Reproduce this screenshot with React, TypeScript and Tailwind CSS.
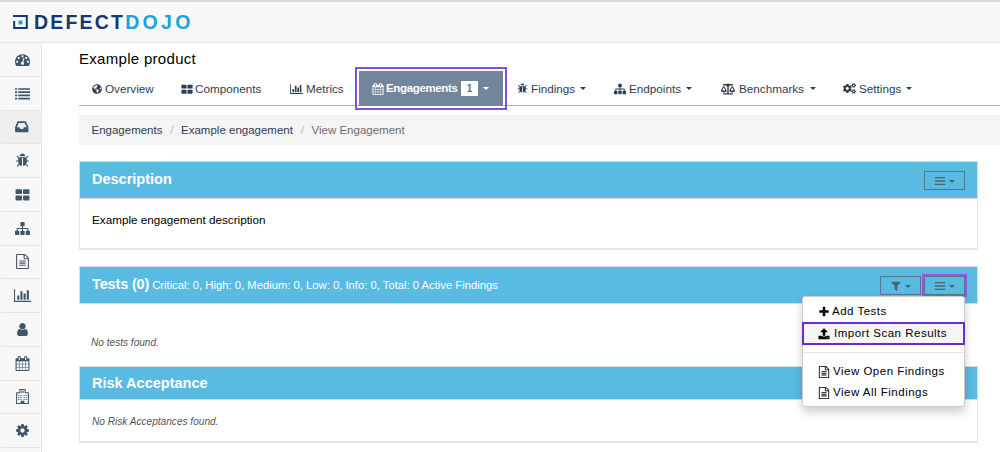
import type { ReactNode } from "react";
import { FaBalanceScale, FaCogs, FaGlobeAmericas } from "react-icons/fa";

const icons = {
  dashboard: "M384 1152q0-53-37.5-90.5t-90.5-37.5-90.5 37.5-37.5 90.5 37.5 90.5 90.5 37.5 90.5-37.5 37.5-90.5zm192-448q0-53-37.5-90.5t-90.5-37.5-90.5 37.5-37.5 90.5 37.5 90.5 90.5 37.5 90.5-37.5 37.5-90.5zm428 481l101-382q6-26-7.5-48.5t-38.5-29.5-48 6.5-30 39.5l-101 382q-60 5-107 43.5t-63 98.5q-20 77 20 146t117 89 146-20 89-117q16-60-6-117t-72-91zm660-33q0-53-37.5-90.5t-90.5-37.5-90.5 37.5-37.5 90.5 37.5 90.5 90.5 37.5 90.5-37.5 37.5-90.5zm-640-640q0-53-37.5-90.5t-90.5-37.5-90.5 37.5-37.5 90.5 37.5 90.5 90.5 37.5 90.5-37.5 37.5-90.5zm448 192q0-53-37.5-90.5t-90.5-37.5-90.5 37.5-37.5 90.5 37.5 90.5 90.5 37.5 90.5-37.5 37.5-90.5zm320 448q0 261-141 483-19 29-54 29h-1402q-35 0-54-29-141-221-141-483 0-182 71-348t191-286 286-191 348-71 348 71 286 191 191 286 71 348z",
  list: "M0 256h256v192h-256zM384 256h1408v192h-1408zM0 640h256v192h-256zM384 640h1408v192h-1408zM0 1024h256v192h-256zM384 1024h1408v192h-1408zM0 1408h256v192h-256zM384 1408h1408v192h-1408z",
  inbox: "M1151 960h316q-1-3-2.5-8.5t-2.5-7.5l-212-496h-708l-212 496q-1 3-2.5 8.5t-2.5 7.5h316l95 192h320zm513 30v482q0 26-19 45t-45 19h-1408q-26 0-45-19t-19-45v-482q0-62 25-123l238-552q10-25 36.5-42t52.5-17h832q26 0 52.5 17t36.5 42l238 552q25 61 25 123z",
  bug: "M1696 960q0 26-19 45t-45 19h-224q0 171-67 290l208 209q19 19 19 45t-19 45q-18 19-45 19t-45-19l-198-197q-5 5-15 13t-42 28.5-65 36.5-82 29-97 13v-896h-128v896q-51 0-101.5-13.5t-87-33-66-39-43.5-32.5l-15-14-183 207q-20 21-48 21-24 0-43-16-19-18-20.5-44.5t15.5-46.5l202-227q-58-114-58-274h-224q-26 0-45-19t-19-45 19-45 45-19h224v-294l-173-173q-19-19-19-45t19-45 45-19 45 19l173 173h844l173-173q19-19 45-19t45 19 19 45-19 45l-173 173v294h224q26 0 45 19t19 45zm-480-576h-640q0-133 93.5-226.5t226.5-93.5 226.5 93.5 93.5 226.5z",
  grid: "M160 256h576q96 0 96 96v384q0 96-96 96h-576q-96 0-96-96v-384q0-96 96-96zM1056 256h576q96 0 96 96v384q0 96-96 96h-576q-96 0-96-96v-384q0-96 96-96zM160 1024h576q96 0 96 96v384q0 96-96 96h-576q-96 0-96-96v-384q0-96 96-96zM1056 1024h576q96 0 96 96v384q0 96-96 96h-576q-96 0-96-96v-384q0-96 96-96z",
  sitemap: "M1792 1248v320q0 40-28 68t-68 28h-320q-40 0-68-28t-28-68v-320q0-40 28-68t68-28h96v-192h-512v192h96q40 0 68 28t28 68v320q0 40-28 68t-68 28h-320q-40 0-68-28t-28-68v-320q0-40 28-68t68-28h96v-192h-512v192h96q40 0 68 28t28 68v320q0 40-28 68t-68 28h-320q-40 0-68-28t-28-68v-320q0-40 28-68t68-28h96v-192q0-52 38-90t90-38h512v-192h-96q-40 0-68-28t-28-68v-320q0-40 28-68t68-28h320q40 0 68 28t28 68v320q0 40-28 68t-68 28h-96v192h512q52 0 90 38t38 90v192h96q40 0 68 28t28 68z",
  file: "M1596 380q28 28 48 76t20 88v1152q0 40-28 68t-68 28h-1344q-40 0-68-28t-28-68v-1600q0-40 28-68t68-28h896q40 0 88 20t76 48zm-444-244v376h376q-10-29-22-41l-313-313q-12-12-41-22zm384 1528v-1024h-416q-40 0-68-28t-28-68v-416h-768v1536h1280zm-1024-864q0-14 9-23t23-9h704q14 0 23 9t9 23v64q0 14-9 23t-23 9h-704q-14 0-23-9t-9-23v-64zm736 224q14 0 23 9t9 23v64q0 14-9 23t-23 9h-704q-14 0-23-9t-9-23v-64q0-14 9-23t23-9h704zm0 256q14 0 23 9t9 23v64q0 14-9 23t-23 9h-704q-14 0-23-9t-9-23v-64q0-14 9-23t23-9h704z",
  chart: "M640 896v512h-256v-512h256zm384-512v1024h-256v-1024h256zm1024 1152v128h-2048v-1536h128v1408h1920zm-640-896v768h-256v-768h256zm384-384v1152h-256v-1152h256z",
  user: "M1536 1399q0 109-62.5 187t-150.5 78h-854q-88 0-150.5-78t-62.5-187q0-85 8.5-160.5t31.5-152 58.5-131 94-89 134.5-34.5q131 128 313 128t313-128q76 0 134.5 34.5t94 89 58.5 131 31.5 152 8.5 160.5zm-256-887q0 159-112.5 271.5t-271.5 112.5-271.5-112.5-112.5-271.5 112.5-271.5 271.5-112.5 271.5 112.5 112.5 271.5z",
  calendar: "M192 1664h288v-288h-288v288zm352 0h320v-288h-320v288zm-352-352h288v-320h-288v320zm352 0h320v-320h-320v320zm-352-384h288v-288h-288v288zm736 736h320v-288h-320v288zm-384-736h320v-288h-320v288zm768 736h288v-288h-288v288zm-384-352h320v-320h-320v320zm-352-864v-288q0-13-9.5-22.5t-22.5-9.5h-64q-13 0-22.5 9.5t-9.5 22.5v288q0 13 9.5 22.5t22.5 9.5h64q13 0 22.5-9.5t9.5-22.5zm736 864h288v-320h-288v320zm-384-384h320v-288h-320v288zm384 0h288v-288h-288v288zm32-480v-288q0-13-9.5-22.5t-22.5-9.5h-64q-13 0-22.5 9.5t-9.5 22.5v288q0 13 9.5 22.5t22.5 9.5h64q13 0 22.5-9.5t9.5-22.5zm384-64v1280q0 52-38 90t-90 38h-1408q-52 0-90-38t-38-90v-1280q0-52 38-90t90-38h128v-96q0-66 47-113t113-47h64q66 0 113 47t47 113v96h384v-96q0-66 47-113t113-47h64q66 0 113 47t47 113v96h128q52 0 90 38t38 90z",
  hospital: "M576 0h640q64 0 64 64v320h320q64 0 64 64v1280q0 64-64 64h-1408q-64 0-64-64v-1280q0-64 64-64h320v-320q0-64 64-64zM640 128v384h-384v1152h416v-256h448v256h416v-1152h-384v-384zM768 192h96v96h64v-96h96v288h-96v-96h-64v96h-96zM384 704h128v128h-128zM640 704h128v128h-128zM1024 704h128v128h-128zM1280 704h128v128h-128zM384 944h128v128h-128zM640 944h128v128h-128zM1024 944h128v128h-128zM1280 944h128v128h-128zM384 1184h128v128h-128zM640 1184h128v128h-128zM1024 1184h128v128h-128zM1280 1184h128v128h-128z",
  cog: "M1152 896q0-106-75-181t-181-75-181 75-75 181 75 181 181 75 181-75 75-181zm512-109v222q0 12-8 23t-20 13l-185 28q-19 54-39 91 35 50 107 138 10 12 10 25t-9 23q-27 37-99 108t-94 71q-12 0-26-9l-138-108q-44 23-91 38-16 136-29 186-7 28-36 28h-222q-14 0-24.5-8.5t-11.5-21.5l-28-184q-49-16-90-37l-141 107q-10 9-25 9-14 0-25-11-126-114-165-168-7-10-7-23 0-12 8-23 15-21 51-66.5t54-70.5q-27-50-41-99l-183-27q-13-2-21-12.5t-8-23.5v-222q0-12 8-23t19-13l186-28q14-46 39-92-40-57-107-138-10-12-10-24 0-10 9-23 26-36 98.5-107.5t94.5-71.5q13 0 26 10l138 107q44-23 91-38 16-136 29-186 7-28 36-28h222q14 0 24.5 8.5t11.5 21.5l28 184q49 16 90 37l142-107q9-9 24-9 13 0 25 10 129 119 165 170 7 8 7 22 0 12-8 23-15 21-51 66.5t-54 70.5q26 50 41 98l183 28q13 2 21 12.5t8 23.5z",
  plus: "M1600 736v192q0 40-28 68t-68 28h-416v416q0 40-28 68t-68 28h-192q-40 0-68-28t-28-68v-416h-416q-40 0-68-28t-28-68v-192q0-40 28-68t68-28h416v-416q0-40 28-68t68-28h192q40 0 68 28t28 68v416h416q40 0 68 28t28 68z",
  filter: "M1595 295q17 41-14 70l-493 493v742q0 42-39 59-13 5-25 5-27 0-45-19l-256-256q-19-19-19-45v-486l-493-493q-31-29-14-70 17-39 59-39h1280q42 0 59 39z",
  upload: "M1344 1472q0-26-19-45t-45-19-45 19-19 45 19 45 45 19 45-19 19-45zm256 0q0-26-19-45t-45-19-45 19-19 45 19 45 45 19 45-19 19-45zm128-224v320q0 40-28 68t-68 28h-1472q-40 0-68-28t-28-68v-320q0-40 28-68t68-28h427q21 56 70.5 92t110.5 36h256q61 0 110.5-36t70.5-92h427q40 0 68 28t28 68zm-325-648q-17 40-59 40h-256v448q0 26-19 45t-45 19h-256q-26 0-45-19t-19-45v-448h-256q-42 0-59-40-17-39 14-69l448-448q18-19 45-19t45 19l448 448q31 30 14 69z",
  bars: "M128 290h1536v200h-1536zM128 796h1536v200h-1536zM128 1302h1536v200h-1536z",
};
type IconName = keyof typeof icons;

function Icon({ name, className = "" }: { name: IconName; className?: string }) {
  return (
    <svg viewBox={name === "chart" ? "0 0 2048 1792" : "0 0 1792 1792"} fill="currentColor" fillRule={name === "hospital" ? "evenodd" : "nonzero"} className={`shrink-0 ${className}`}>
      <path d={icons[name]} />
    </svg>
  );
}

const Caret = ({ className = "" }: { className?: string }) => (
  <svg viewBox="0 0 6 3" fill="currentColor" className={`h-[3px] w-[6px] shrink-0 ${className}`}><path d="M0 0h6L3 3z" /></svg>
);

const sidebar: IconName[] = ["dashboard", "list", "inbox", "bug", "grid", "sitemap", "file", "chart", "user", "calendar", "hospital", "cog"];

function NavItem({ icon, label, className, caret }: { icon: ReactNode; label: string; className: string; caret?: boolean }) {
  return (
    <li className={`flex h-full items-center pt-px ${className}`}>
      {icon}
      <span className="whitespace-nowrap">{label}</span>
      {caret && <Caret className="ml-[2px]" />}
    </li>
  );
}

function ToolButton({ icon, className = "" }: { icon: IconName; className?: string }) {
  return (
    <button className={`flex h-[19px] w-[41px] shrink-0 items-center justify-center gap-[3px] border border-[#54788b] text-[#50616c] ${className}`}>
      <Icon name={icon} className="size-[12px]" />
      <Caret className="mt-px" />
    </button>
  );
}

function Header({ children, tools, className }: { children: ReactNode; tools?: ReactNode; className: string }) {
  return (
    <div className={`flex items-center justify-between border border-[#d2dfe5] bg-[#59bae2] pl-3 pr-3 text-white ${className}`}>
      <h3 className="whitespace-nowrap text-[14.5px] font-bold">{children}</h3>
      <div className="flex shrink-0 items-center gap-[3px] pt-px">{tools}</div>
    </div>
  );
}

export default function App() {
  return (
    <div className="flex h-[452px] w-[1000px] flex-col overflow-hidden bg-white font-['Liberation_Sans',Arial,sans-serif] text-[11.7px] text-[#2c3e50]">
      <header className="flex h-[43px] shrink-0 items-center border-t-2 border-b border-t-[#d8d8d8] border-b-[#e7e7e7] bg-[#f8f8f8] pl-[13px]">
        <svg viewBox="0 0 15 14" className="mr-[6px] h-[14px] w-[15px]" fill="none">
          <path d="M0 1h13.8v12H1.2V6" stroke="#123a70" strokeWidth="2" />
          <path d="M5.5 5.5h4v4h-4z" fill="#16a5df" />
        </svg>
        <div className="whitespace-nowrap text-[19.5px] font-bold leading-[20px]">
          <span className="tracking-[2.2px] text-[#123a70]">DEFECT</span>
          <span className="tracking-[3.3px] text-[#16a5df]">DOJO</span>
        </div>
      </header>
      <div className="flex min-h-0 flex-1">
        <aside className="w-[42px] shrink-0 overflow-hidden border-r border-[#e5e5e5] bg-[#f8f8f8]">
          {sidebar.map((name) => (
            <div key={name} className={`flex h-[33.75px] items-center justify-center rounded-[3px] border-b border-[#e5e5e5] pl-[3px] text-[#40566b] ${name === "inbox" ? "bg-[#eeeeee]" : ""}`}>
              <Icon name={name} className={name === "chart" ? "h-[15px] w-[17px]" : name === "inbox" ? "size-[15.5px]" : "size-[15px]"} />
            </div>
          ))}
        </aside>
        <main className="min-w-0 flex-1 pl-[37px]">
          <h1 className="h-[28px] pt-[6px] text-[15px] font-normal leading-[20px] tracking-[0.3px] text-black">Example product</h1>
          <ul className="flex h-[35px] items-center border-b border-[#abbac6]">
            <NavItem className="ml-[13px] w-[89px] gap-[3px]" icon={<FaGlobeAmericas className="size-[10px]" />} label="Overview" />
            <NavItem className="w-[109px] gap-[2px]" icon={<Icon name="grid" className="size-[12px]" />} label="Components" />
            <NavItem className="w-[69px] gap-[3px]" icon={<Icon name="chart" className="h-[12px] w-[13px]" />} label="Metrics" />
            <li className="z-10 flex h-[35px] w-[144px] items-center bg-[#71869b] pl-[13px] pt-px font-bold text-white outline-2 outline-offset-2 outline-[#8150dc]">
              <Icon name="calendar" className="mr-[2px] size-[12px]" />
              <span className="w-[72px] whitespace-nowrap text-[11.5px] tracking-[-0.35px]">Engagements</span>
              <span className="ml-[3px] flex h-[15px] w-[17px] items-center justify-center bg-white text-[10px] text-[#5c7186]">1</span>
              <Caret className="ml-[5px]" />
            </li>
            <NavItem caret className="ml-[14px] w-[97px] gap-[3px]" icon={<Icon name="bug" className="size-[11px]" />} label="Findings" />
            <NavItem caret className="w-[107px] gap-[3px]" icon={<Icon name="sitemap" className="size-[12px]" />} label="Endpoints" />
            <NavItem caret className="w-[122px] gap-[4px]" icon={<FaBalanceScale className="size-[14px]" />} label="Benchmarks" />
            <NavItem caret className="gap-[3px]" icon={<FaCogs className="size-[13px]" />} label="Settings" />
          </ul>
          <div className="mt-[9px] flex h-[30px] items-center bg-[#f4f4f4] pl-[12.5px] pt-px text-[11.5px]">
            <span>Engagements</span><span className="mx-[7.7px] text-[#bbb]">/</span>
            <span>Example engagement</span><span className="mx-[7.7px] text-[#bbb]">/</span>
            <span className="text-[#6e6e6e]">View Engagement</span>
          </div>
          <section className="mt-[16px] h-[89px] w-[899px] border-x border-b-2 border-[#e5e5e5]">
            <Header className="-mx-px h-[38px]" tools={<ToolButton icon="bars" />}>Description</Header>
            <p className="px-3 pt-[13px] leading-[16px] text-black">Example engagement description</p>
          </section>
          <section className="mt-[16px] h-[100px] w-[899px]">
            <div className="relative">
              <Header className="h-[38px]" tools={<><ToolButton icon="filter" /><ToolButton icon="bars" className="outline-2 outline-[#9a55df]" /></>}>
                <span className="tracking-[-0.15px]">Tests (0)</span> <span className="-ml-px text-[11.25px] font-normal">Critical: 0, High: 0, Medium: 0, Low: 0, Info: 0, Total: 0 Active Findings</span>
              </Header>
              <div className="absolute right-[13px] top-[30px] z-20 h-[111px] w-[163px] rounded-[3px] border border-[#ccc] bg-white pt-[4px] text-[11.5px] tracking-[0.5px] text-black shadow-[0_5px_10px_rgba(0,0,0,0.2)]">
                <div className="flex h-[21px] items-center gap-[2px] pl-[15px] pt-px"><Icon name="plus" className="size-[12px]" />Add Tests</div>
                <div className="-mx-px flex h-[23px] items-center gap-[4px] border-2 border-[#6b2bd2] bg-[#f5f5f5] pl-[14px]"><Icon name="upload" className="size-[12px]" />Import Scan Results</div>
                <div className="my-[7px] h-px bg-[#e5e5e5]" />
                <div className="mt-[8px] flex h-[21px] items-center gap-[3px] pl-[15px]"><Icon name="file" className="size-[12px]" />View Open Findings</div>
                <div className="flex h-[22px] items-center gap-[3px] pl-[15px]"><Icon name="file" className="size-[12px]" />View All Findings</div>
              </div>
            </div>
            <p className="px-3 pt-[31px] text-[10.1px] italic leading-[16px] text-[#555]">No tests found.</p>
          </section>
          <section className="h-[77px] w-[899px] border-x border-b-2 border-[#e5e5e5]">
            <Header className="-mx-px h-[34px] pt-px" tools={<ToolButton icon="bars" />}>Risk Acceptance</Header>
            <p className="px-3 pt-[14px] text-[10.1px] italic leading-[16px] text-[#555]">No Risk Acceptances found.</p>
          </section>
        </main>
      </div>
    </div>
  );
}
